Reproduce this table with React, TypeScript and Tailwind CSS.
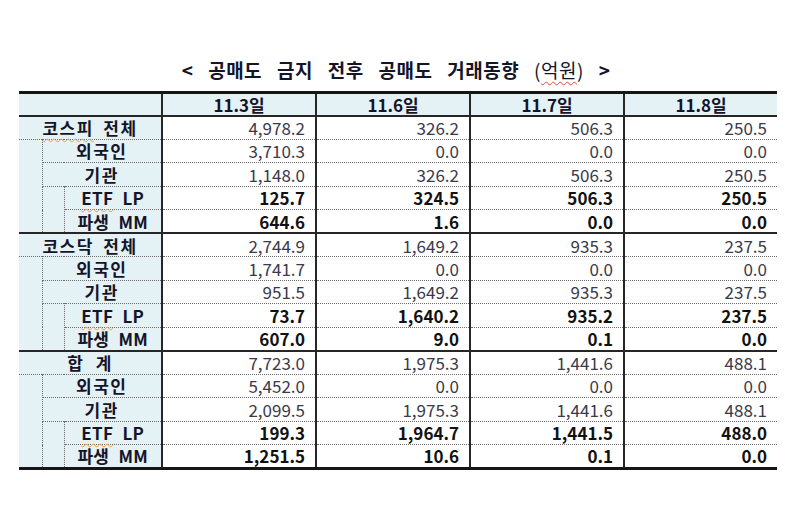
import React from 'react';

type Row = { label: string; level: 0 | 1 | 2; values: string[] };

const sections: Row[][] = [
  [
    { label: '코스피 전체', level: 0, values: ['4,978.2', '326.2', '506.3', '250.5'] },
    { label: '외국인', level: 1, values: ['3,710.3', '0.0', '0.0', '0.0'] },
    { label: '기관', level: 1, values: ['1,148.0', '326.2', '506.3', '250.5'] },
    { label: 'ETF LP', level: 2, values: ['125.7', '324.5', '506.3', '250.5'] },
    { label: '파생 MM', level: 2, values: ['644.6', '1.6', '0.0', '0.0'] },
  ],
  [
    { label: '코스닥 전체', level: 0, values: ['2,744.9', '1,649.2', '935.3', '237.5'] },
    { label: '외국인', level: 1, values: ['1,741.7', '0.0', '0.0', '0.0'] },
    { label: '기관', level: 1, values: ['951.5', '1,649.2', '935.3', '237.5'] },
    { label: 'ETF LP', level: 2, values: ['73.7', '1,640.2', '935.2', '237.5'] },
    { label: '파생 MM', level: 2, values: ['607.0', '9.0', '0.1', '0.0'] },
  ],
  [
    { label: '합 계', level: 0, values: ['7,723.0', '1,975.3', '1,441.6', '488.1'] },
    { label: '외국인', level: 1, values: ['5,452.0', '0.0', '0.0', '0.0'] },
    { label: '기관', level: 1, values: ['2,099.5', '1,975.3', '1,441.6', '488.1'] },
    { label: 'ETF LP', level: 2, values: ['199.3', '1,964.7', '1,441.5', '488.0'] },
    { label: '파생 MM', level: 2, values: ['1,251.5', '10.6', '0.1', '0.0'] },
  ],
];

const dates = ['11.3일', '11.6일', '11.7일', '11.8일'];

const font = { fontFamily: "'Noto Sans CJK KR', 'Noto Sans', sans-serif" };

// spell-check squiggle seen in the screenshot
const Squiggle: React.FC<{ children: React.ReactNode; red?: boolean }> = ({ children, red }) => (
  <span
    className={`underline decoration-wavy decoration-1 underline-offset-[3px] ${
      red ? 'decoration-[#e04a2a]' : 'decoration-[#f0a030]'
    }`}
  >
    {children}
  </span>
);

const renderLabel = (label: string) => {
  if (label === '코스피 전체')
    return (
      <>
        <Squiggle>코스피</Squiggle> 전체
      </>
    );
  if (label === 'ETF LP')
    return (
      <>
        <Squiggle>ETF</Squiggle> LP
      </>
    );
  if (label === '합 계') return <span className="[word-spacing:6px]">합 계</span>;
  return label;
};

export default function App() {
  return (
    <div className="w-[792px] h-[508px] bg-white overflow-hidden pt-[56px]" style={font}>
      <h1 className="h-[28px] leading-[28px] text-center text-[19px] font-bold text-[#15152a] [word-spacing:10px] tracking-[0.5px]">
        &lt; 공매도 금지 전후 공매도 거래동향{' '}
        <span className="font-normal">
          (<Squiggle red>억원</Squiggle>)
        </span>{' '}
        &gt;
      </h1>

      <table className="mt-[7px] ml-[19px] w-[758px] table-fixed border-collapse text-[17px]">
        <colgroup>
          <col className="w-[23px]" />
          <col className="w-[22px]" />
          <col className="w-[98px]" />
          <col className="w-[154px]" />
          <col className="w-[154px]" />
          <col className="w-[154px]" />
          <col className="w-[153px]" />
        </colgroup>
        <thead>
          <tr className="h-[23px] bg-[#e5f2f5] border-t-[3px] border-t-[#161616] border-b-2 border-b-[#262626]">
            <th colSpan={3} className="border-r-2 border-r-[#262626]" />
            {dates.map((d, i) => (
              <th
                key={d}
                className={`p-0 text-center font-bold text-[#15152a] leading-none ${
                  i < 3 ? 'border-r-2 border-r-[#262626]' : ''
                }`}
              >
                {d}
              </th>
            ))}
          </tr>
        </thead>
        <tbody>
          {sections.map((rows, si) =>
            rows.map((row, ri) => {
              const bold = row.level === 2;
              const isLast = si === sections.length - 1 && ri === rows.length - 1;
              const sectionEnd = ri === rows.length - 1;
              const bottom = isLast
                ? 'border-b-[3px] border-b-[#161616]'
                : sectionEnd
                ? 'border-b-2 border-b-[#262626]'
                : 'border-b border-dotted border-b-[#6b6b6b]';
              return (
                <tr key={`${si}-${ri}`} className={`h-[23.5px] ${bottom}`}>
                  {ri === 1 && (
                    <td
                      rowSpan={4}
                      className="bg-[#e5f2f5] border-r border-dotted border-r-[#6b6b6b] p-0"
                    />
                  )}
                  {ri === 3 && (
                    <td
                      rowSpan={2}
                      className="bg-[#e5f2f5] border-r border-dotted border-r-[#6b6b6b] p-0"
                    />
                  )}
                  <td
                    colSpan={row.level === 0 ? 3 : row.level === 1 ? 2 : 1}
                    className={`bg-[#e5f2f5] p-0 text-center text-[17px] font-bold text-[#15152a] leading-none whitespace-nowrap border-r-2 border-r-[#262626] ${
                      row.level === 2 ? 'tracking-[0.3px] [word-spacing:5px]' : 'tracking-[1.5px] [word-spacing:4px]'
                    }`}
                  >
                    {renderLabel(row.label)}
                  </td>
                  {row.values.map((v, vi) => (
                    <td
                      key={vi}
                      className={`p-0 pr-[10px] text-right leading-none ${
                        bold ? 'font-bold text-[#111]' : 'text-[#3a3a4a]'
                      } ${vi < 3 ? 'border-r-2 border-r-[#262626] border-solid' : ''}`}
                    >
                      {v}
                    </td>
                  ))}
                </tr>
              );
            })
          )}
        </tbody>
      </table>
    </div>
  );
}
